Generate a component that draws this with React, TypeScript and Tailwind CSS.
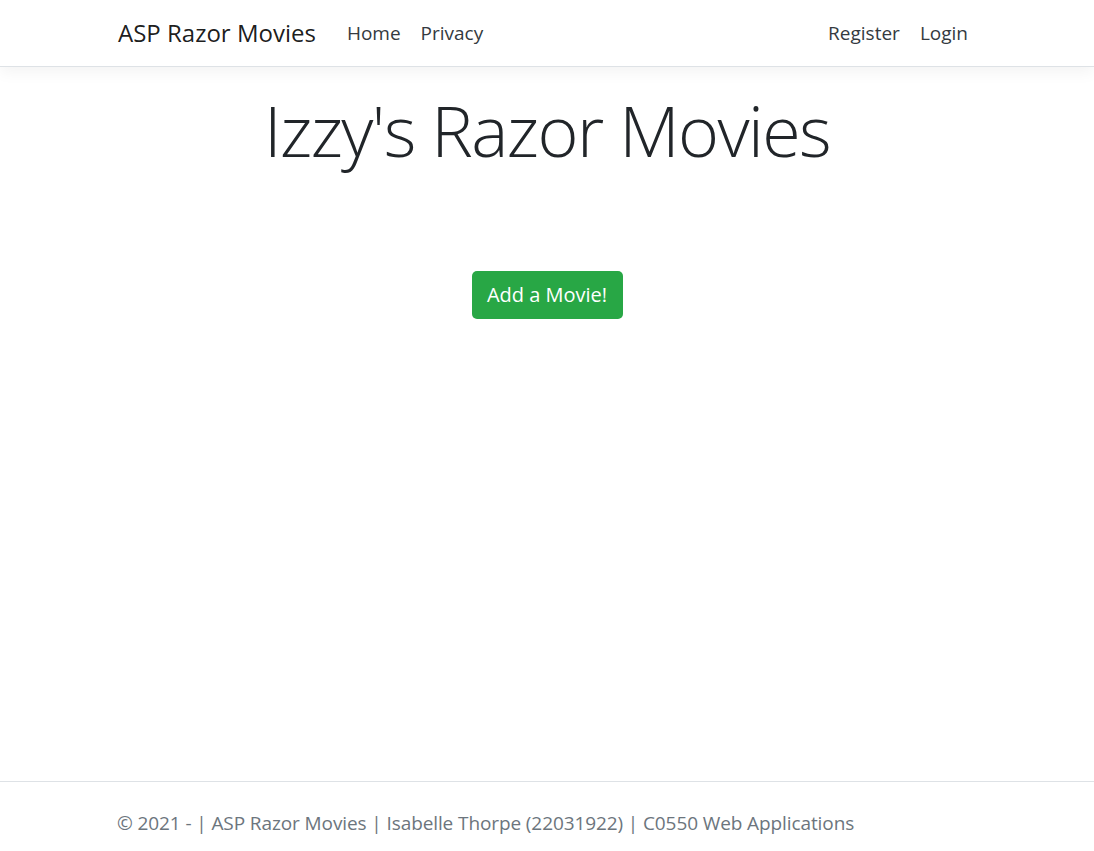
export default function App() {
  return (
    <div
      className="flex h-screen flex-col bg-white text-[#212529]"
      style={{ fontFamily: '"Open Sans", "Noto Sans", sans-serif' }}
    >
      <header className="h-[67px] shrink-0 border-b border-[#dee2e6] shadow-[0_5px_15px_rgba(0,0,0,0.05)]">
        <nav className="mx-auto flex h-full w-[900px] items-center pl-[21px] pr-[19px]">
          <a className="mr-[21px] text-[24px] leading-[38px] text-black/90">ASP Razor Movies</a>
          <div className="flex flex-1 items-center text-[19px] text-[#343a40]">
            <a className="px-[10px]">Home</a>
            <a className="px-[10px]">Privacy</a>
            <div className="flex-1" />
            <a className="px-[10px]">Register</a>
            <a className="px-[10px]">Login</a>
          </div>
        </nav>
      </header>
      <main className="mx-auto w-[900px] flex-1 px-[19px] text-center">
        <h1 className="mt-[21px] text-[70px] font-light leading-[84px] tracking-[-1.6px]">Izzy's Razor Movies</h1>
        <div className="mt-[99px]">
          <button className="h-[48px] w-[151px] rounded-[5px] bg-[#28a745] text-[20px] text-white">
            Add a Movie!
          </button>
        </div>
      </main>
      <footer className="h-[70px] shrink-0 border-t border-[#dee2e6] text-[19px] text-[#6c757d]">
        <div className="mx-auto w-[900px] pl-[20px] pr-[19px] pt-[26px] leading-[30px] tracking-[-0.1px]">
          © 2021 - | ASP Razor Movies | Isabelle Thorpe (22031922) | C0550 Web Applications
        </div>
      </footer>
    </div>
  );
}
